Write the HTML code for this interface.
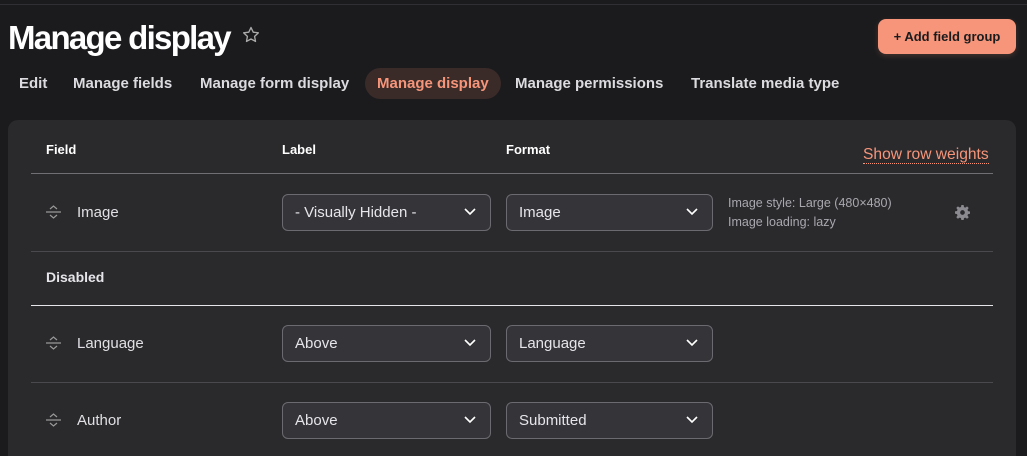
<!DOCTYPE html>
<html><head><meta charset="utf-8"><style>
*{box-sizing:border-box;margin:0;padding:0}
html,body{width:1027px;height:456px;overflow:hidden}
body{background:#1b1b1d;font-family:"Liberation Sans",sans-serif;color:#e6e6ea;position:relative}
.a{position:absolute;white-space:nowrap}
.topline{position:absolute;left:0;right:0;top:4px;height:1px;background:#303034}
h1{position:absolute;left:8px;top:19px;font-size:33px;font-weight:bold;color:#fff;letter-spacing:-1.7px;white-space:nowrap}
.btn{position:absolute;left:878px;top:19px;width:138px;height:35px;background:#f6957a;border-radius:8px;color:#1b1b1d;font-size:13px;font-weight:bold;text-align:center;line-height:35px;box-shadow:0 2px 6px rgba(246,149,122,.2)}
.tab{position:absolute;top:75px;font-size:15px;font-weight:bold;color:#dcdce0}
.act{position:absolute;left:365px;top:68px;width:136px;height:31px;border-radius:16px;background:#3a2b29}
.card{position:absolute;left:8px;top:120px;width:1008px;height:336px;background:#2a2a2d;border-radius:10px 10px 0 0}
.th{position:absolute;top:142px;font-size:13px;font-weight:bold;color:#fff}
.ln{position:absolute;left:31px;width:962px;height:1px;background:#4a4a4e}
.sel{position:absolute;height:37px;border:1px solid #6a6a70;border-radius:6px;background:#353539;font-size:15px;color:#e6e6ea;padding-left:12px;line-height:35px}
.sel svg{position:absolute;right:14px;top:13px}
.lbl{position:absolute;left:77px;font-size:15px;color:#e0e0e4}
.drag{position:absolute;left:46px;width:15px}
</style></head><body>
<div class="topline"></div>
<h1>Manage display <svg style="vertical-align:4px;margin-left:4px" width="20" height="20" viewBox="0 0 24 24"><path d="M12 3l2.7 5.6 6.1.8-4.5 4.2 1.1 6.1L12 16.8 6.6 19.7l1.1-6.1L3.2 9.4l6.1-.8z" fill="none" stroke="#aaa" stroke-width="1.6" stroke-linejoin="round"/></svg></h1>
<div class="btn">+ Add field group</div>
<div class="act"></div>
<div class="tab" style="left:19px">Edit</div>
<div class="tab" style="left:73px">Manage fields</div>
<div class="tab" style="left:200px">Manage form display</div>
<div class="tab" style="left:377px;color:#f6957a">Manage display</div>
<div class="tab" style="left:515px">Manage permissions</div>
<div class="tab" style="left:691px">Translate media type</div>
<div class="card"></div>
<div class="th" style="left:46px">Field</div>
<div class="th" style="left:282px">Label</div>
<div class="th" style="left:506px">Format</div>
<div class="a" style="left:863px;top:146px;font-size:15.6px;color:#f6957a;border-bottom:1px dotted #f6957a;line-height:17px">Show row weights</div>
<div class="ln" style="top:173px;background:#707074"></div>
<svg class="drag" style="top:204px" height="16" viewBox="0 0 15 16"><path d="M4 5l3.5-3 3.5 3M0 8h15M4 11l3.5 3 3.5-3" fill="none" stroke="#999" stroke-width="1.2"/></svg>
<div class="lbl" style="top:204px">Image</div>
<div class="sel" style="left:282px;top:194px;width:209px">- Visually Hidden -<svg width="12" height="8" viewBox="0 0 12 8"><path d="M1 1l5 5 5-5" fill="none" stroke="#fff" stroke-width="1.6"/></svg></div>
<div class="sel" style="left:506px;top:194px;width:207px">Image<svg width="12" height="8" viewBox="0 0 12 8"><path d="M1 1l5 5 5-5" fill="none" stroke="#fff" stroke-width="1.6"/></svg></div>
<div class="a" style="left:728px;top:194px;font-size:12.5px;color:#a8a8ae;line-height:19px">Image style: Large (480×480)<br>Image loading: lazy</div>
<svg class="a" style="left:955px;top:205px" width="15" height="15" viewBox="0 0 16 16"><path fill="#8a8a90" fill-rule="evenodd" d="M6.8 0h2.4l.4 2.2 1.4.6 1.9-1.3 1.7 1.7-1.3 1.9.6 1.4 2.1.4v2.4l-2.1.4-.6 1.4 1.3 1.9-1.7 1.7-1.9-1.3-1.4.6-.4 2.1H6.8l-.4-2.1-1.4-.6-1.9 1.3-1.7-1.7 1.3-1.9-.6-1.4L0 9.2V6.8l2.1-.4.6-1.4-1.3-1.9 1.7-1.7 1.9 1.3 1.4-.6zM8 5.5a2.5 2.5 0 1 0 0 5 2.5 2.5 0 0 0 0-5z"/></svg>
<div class="ln" style="top:251px"></div>
<div class="a" style="left:46px;top:269px;font-size:14px;font-weight:bold;color:#e6e6ea">Disabled</div>
<div class="ln" style="top:305px;background:#e6e6ea"></div>
<svg class="drag" style="top:335px" height="16" viewBox="0 0 15 16"><path d="M4 5l3.5-3 3.5 3M0 8h15M4 11l3.5 3 3.5-3" fill="none" stroke="#999" stroke-width="1.2"/></svg>
<div class="lbl" style="top:335px">Language</div>
<div class="sel" style="left:282px;top:325px;width:209px">Above<svg width="12" height="8" viewBox="0 0 12 8"><path d="M1 1l5 5 5-5" fill="none" stroke="#fff" stroke-width="1.6"/></svg></div>
<div class="sel" style="left:506px;top:325px;width:207px">Language<svg width="12" height="8" viewBox="0 0 12 8"><path d="M1 1l5 5 5-5" fill="none" stroke="#fff" stroke-width="1.6"/></svg></div>
<div class="ln" style="top:382px"></div>
<svg class="drag" style="top:412px" height="16" viewBox="0 0 15 16"><path d="M4 5l3.5-3 3.5 3M0 8h15M4 11l3.5 3 3.5-3" fill="none" stroke="#999" stroke-width="1.2"/></svg>
<div class="lbl" style="top:412px">Author</div>
<div class="sel" style="left:282px;top:402px;width:209px">Above<svg width="12" height="8" viewBox="0 0 12 8"><path d="M1 1l5 5 5-5" fill="none" stroke="#fff" stroke-width="1.6"/></svg></div>
<div class="sel" style="left:506px;top:402px;width:207px">Submitted<svg width="12" height="8" viewBox="0 0 12 8"><path d="M1 1l5 5 5-5" fill="none" stroke="#fff" stroke-width="1.6"/></svg></div>
</body></html>
